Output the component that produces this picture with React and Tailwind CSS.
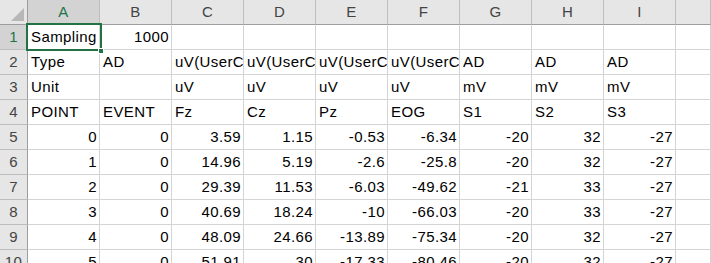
const cols = ['A', 'B', 'C', 'D', 'E', 'F', 'G', 'H', 'I', ''];

const uv = ['uV(UserCustom)', 'l'];

// each cell: [text, align]  'l' = left, 'r' = right
const rows = [
  [['Sampling', 'l'], ['1000', 'r']],
  [['Type', 'l'], ['AD', 'l'], uv, uv, uv, uv, ['AD', 'l'], ['AD', 'l'], ['AD', 'l']],
  [['Unit', 'l'], ['', 'l'], ['uV', 'l'], ['uV', 'l'], ['uV', 'l'], ['uV', 'l'], ['mV', 'l'], ['mV', 'l'], ['mV', 'l']],
  [['POINT', 'l'], ['EVENT', 'l'], ['Fz', 'l'], ['Cz', 'l'], ['Pz', 'l'], ['EOG', 'l'], ['S1', 'l'], ['S2', 'l'], ['S3', 'l']],
  ['0', '0', '3.59', '1.15', '-0.53', '-6.34', '-20', '32', '-27'].map((v) => [v, 'r']),
  ['1', '0', '14.96', '5.19', '-2.6', '-25.8', '-20', '32', '-27'].map((v) => [v, 'r']),
  ['2', '0', '29.39', '11.53', '-6.03', '-49.62', '-21', '33', '-27'].map((v) => [v, 'r']),
  ['3', '0', '40.69', '18.24', '-10', '-66.03', '-20', '33', '-27'].map((v) => [v, 'r']),
  ['4', '0', '48.09', '24.66', '-13.89', '-75.34', '-20', '32', '-27'].map((v) => [v, 'r']),
  ['5', '0', '51.91', '30', '-17.33', '-80.46', '-20', '32', '-27'].map((v) => [v, 'r']),
];

const App = () => {
  return (
    <div className="relative w-[711px] h-[263px] overflow-hidden bg-white font-['Liberation_Sans','Noto_Sans_CJK_JP',sans-serif] text-[15px] tracking-[0.4px] text-black">
      <div className="grid grid-cols-[28px_repeat(9,72px)_1fr] auto-rows-[25px]">
        {/* corner */}
        <div className="bg-[#e6e6e6] border-r border-b border-[#9e9e9e] flex items-end justify-end p-[3px]">
          <svg width="13" height="13" viewBox="0 0 13 13">
            <polygon points="13,0 13,13 0,13" fill="#b7b7b7" />
          </svg>
        </div>
        {cols.map((c, i) => (
          <div
            key={c + i}
            className={
              i === 0
                ? 'bg-[#d3d3d3] text-[#217346] border-r border-r-[#bdbdbd] border-b border-b-[#9e9e9e] flex items-center justify-center'
                : 'bg-[#e6e6e6] text-[#444] border-r border-r-[#bdbdbd] border-b border-b-[#9e9e9e] flex items-center justify-center'
            }
          >
            {c}
          </div>
        ))}

        {rows.map((r, ri) => (
          <RowCells key={ri} num={ri + 1} cells={r} />
        ))}
      </div>

      {/* selected cell A1 */}
      <div className="absolute left-[26px] top-[23px] w-[76px] h-[28px] border-2 border-[#217346]" />
      <div className="absolute left-[98px] top-[48px] w-[6px] h-[6px] bg-[#217346] border border-white" />
    </div>
  );
};

const RowCells = ({ num, cells }) => {
  const filled = [...cells];
  while (filled.length < 10) filled.push(['', 'l']);
  return (
    <>
      <div
        className={
          num === 1
            ? 'bg-[#d3d3d3] text-[#217346] border-r border-r-[#9e9e9e] border-b border-b-[#bdbdbd] flex items-center justify-center'
            : 'bg-[#e6e6e6] text-[#444] border-r border-r-[#9e9e9e] border-b border-b-[#bdbdbd] flex items-center justify-center'
        }
      >
        {num}
      </div>
      {filled.map(([text, align], ci) => (
        <div
          key={ci}
          className={
            align === 'r'
              ? 'border-r border-b border-[#d4d4d4] flex items-center justify-end pl-[3px] pr-[2px] overflow-hidden whitespace-nowrap'
              : 'border-r border-b border-[#d4d4d4] flex items-center justify-start px-[3px] overflow-hidden whitespace-nowrap'
          }
        >
          {text}
        </div>
      ))}
    </>
  );
};

export default App;
